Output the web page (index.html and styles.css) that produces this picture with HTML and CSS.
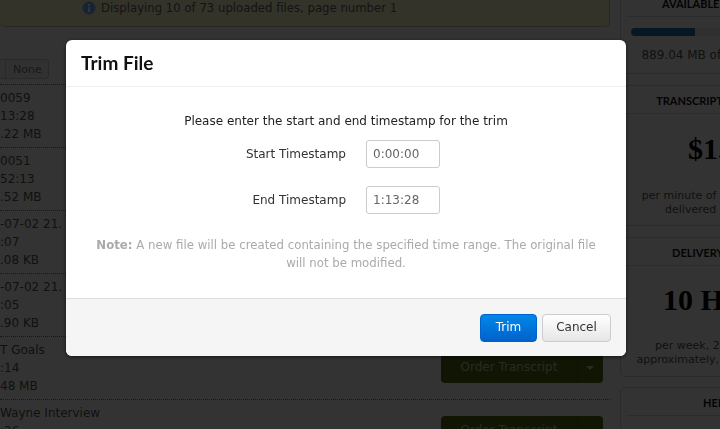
FILE: index.html
```html
<!DOCTYPE html>
<html lang="en">
<head>
    <meta charset="UTF-8">
    <meta name="viewport" content="width=device-width, initial-scale=1.0">
    <title>Trim File</title>
    <link rel="stylesheet" href="styles.css">
</head>
<body>
    <div class="page">
        <div class="main">
            <div class="notice">
                <svg class="notice-icon" width="14" height="14" viewBox="0 0 14 14">
                    <circle cx="7" cy="7" r="6.5" fill="#6eb4ff"/>
                    <rect x="6" y="6" width="2" height="5" fill="#fff"/>
                    <rect x="6" y="3" width="2" height="2" fill="#fff"/>
                </svg>
                <span>Displaying 10 of 73 uploaded files, page number 1</span>
            </div>

            <div class="select-bar">
                <div class="select-group">
                    <span class="select-all"></span>
                    <span class="select-none">None</span>
                </div>
            </div>

            <div class="file-row">
                <div class="file-info"><div>0059</div><div>13:28</div><div>.22 MB</div></div>
            </div>
            <div class="file-row">
                <div class="file-info"><div>0051</div><div>52:13</div><div>.52 MB</div></div>
            </div>
            <div class="file-row">
                <div class="file-info"><div>-07-02 21.</div><div>:07</div><div>.08 KB</div></div>
            </div>
            <div class="file-row">
                <div class="file-info"><div>-07-02 21.</div><div>:05</div><div>.90 KB</div></div>
            </div>
            <div class="file-row">
                <div class="file-info"><div>T Goals</div><div>:14</div><div>48 MB</div></div>
                <div class="order-button"><span class="order-label">Order Transcript</span><span class="order-caret"></span></div>
            </div>
            <div class="file-row">
                <div class="file-info"><div>Wayne Interview</div><div>:26</div></div>
                <div class="order-button"><span class="order-label">Order Transcript</span><span class="order-caret"></span></div>
            </div>
        </div>

        <div class="sidebar">
            <div class="box box-storage">
                <h3 class="box-title">AVAILABLE STORAGE SPACE</h3>
                <div class="progress"><div class="progress-fill"></div></div>
                <p class="storage-text">889.04 MB of 5.00 GB used up.</p>
            </div>
            <div class="box box-price">
                <h3 class="box-title">TRANSCRIPTION PRICE GUIDE</h3>
                <div class="big-value value-price">$1.00</div>
                <p class="box-text">per minute of audio or video files,<br>delivered within 10 hours</p>
            </div>
            <div class="box box-delivery">
                <h3 class="box-title">DELIVERY GUARANTEES</h3>
                <div class="big-value value-delivery">10 Hours</div>
                <p class="box-text">per week, 2 hours or less too<br>approximately, for all files you send</p>
            </div>
            <div class="box box-help">
                <h3 class="box-title">HELP GUIDE</h3>
            </div>
        </div>
    </div>

    <div class="overlay"></div>

    <div class="modal">
        <div class="modal-header">Trim File</div>
        <div class="modal-body">
            <p class="intro">Please enter the start and end timestamp for the trim</p>
            <div class="field">
                <label class="field-label">Start Timestamp</label>
                <input class="field-input" type="text" value="0:00:00">
            </div>
            <div class="field">
                <label class="field-label">End Timestamp</label>
                <input class="field-input" type="text" value="1:13:28">
            </div>
            <p class="note"><b>Note:</b> A new file will be created containing the specified time range. The original file will not be modified.</p>
        </div>
        <div class="modal-footer">
            <button class="btn btn-primary">Trim</button>
            <button class="btn btn-cancel">Cancel</button>
        </div>
    </div>
</body>
</html>
```

FILE: styles.css
```css
* {
    margin: 0;
    padding: 0;
    box-sizing: border-box;
}

html, body {
    height: 100%;
    overflow: hidden;
}

body {
    font-family: 'DejaVu Sans', sans-serif;
    font-size: 12px;
    line-height: 18px;
    color: #555;
    background-color: #fff;
}

.page {
    display: flex;
    width: 960px;
}

.main {
    width: 610px;
    flex-shrink: 0;
}

.notice {
    display: flex;
    align-items: center;
    gap: 5px;
    height: 28px;
    margin-top: -1px;
    padding: 0 0 10px 82px;
    font-size: 11.7px;
    background-color: #fffccf;
    border: 1px solid #c9c98a;
    border-top: none;
    border-left: none;
    border-radius: 0 0 5px 5px;
    color: #666;
}

.select-bar {
    height: 57px;
    padding-top: 32px;
}

.select-group {
    display: flex;
    width: 49px;
    height: 20px;
    background-color: #f5f5f5;
    border: 1px solid #ccc;
    border-left: none;
    border-radius: 0 4px 4px 0;
    font-size: 11px;
    line-height: 20px;
    color: #777;
}

.select-all {
    width: 6px;
    border-right: 1px solid #ccc;
}

.select-none {
    padding-left: 7px;
}

.file-row {
    display: flex;
    justify-content: space-between;
    height: 63px;
    padding: 4px 7px 0 0;
    border-top: 1px dotted #887f22;
}

.order-button {
    display: flex;
    width: 162px;
    height: 30px;
    margin-top: 12px;
    background-color: #4f7010;
    border-radius: 4px;
    color: #c8d0b0;
    font-size: 12px;
    line-height: 28px;
}

.order-label {
    flex: 1;
    text-align: center;
    border-right: 1px solid #405c0c;
}

.order-caret {
    position: relative;
    width: 25px;
}

.order-caret::after {
    content: "";
    position: absolute;
    left: 8px;
    top: 13px;
    border-left: 4px solid transparent;
    border-right: 4px solid transparent;
    border-top: 4px solid #c8d0b0;
}

.sidebar {
    width: 230px;
    margin-left: 10px;
    flex-shrink: 0;
}

.box {
    padding: 0 5px;
    background-color: #fff;
    border: 1px solid #d5d5d5;
    border-radius: 5px;
    text-align: center;
    margin-bottom: 11px;
}

.box-title {
    height: 28px;
    font-family: 'Lato', sans-serif;
    font-size: 11px;
    line-height: 30px;
    color: #111;
    border-bottom: 1px solid #ddd;
}

.box-storage {
    margin-top: -12px;
    height: 86px;
}

.progress {
    width: 200px;
    height: 8px;
    margin: 11px 0 0 5px;
    background-color: #eee;
    border-radius: 4px;
    overflow: hidden;
}

.progress-fill {
    width: 64px;
    height: 100%;
    background: repeating-linear-gradient(-45deg, #1e6fa8 0 14px, #2478b4 14px 28px);
}

.storage-text {
    margin-top: 10px;
}

.box-price {
    height: 141px;
}

.box-delivery {
    height: 140px;
    margin-bottom: 10px;
}

.big-value {
    text-align: left;
    font-family: 'Liberation Serif', serif;
    font-size: 30px;
    font-weight: bold;
    line-height: 36px;
    color: #000;
}

.value-price {
    margin: 17px 0 0 62px;
}

.value-delivery {
    margin: 16px 0 0 37px;
}

.box-text {
    font-size: 11px;
    line-height: 14px;
}

.box-price .box-text {
    margin-top: 22px;
}

.box-delivery .box-text {
    margin-top: 21px;
}

.box-help {
    height: 60px;
}

.overlay {
    position: fixed;
    inset: 0;
    background-color: rgba(0, 0, 0, 0.8);
}

.modal {
    position: fixed;
    left: 66px;
    top: 40px;
    width: 560px;
    height: 316px;
    display: flex;
    flex-direction: column;
    background-color: #fff;
    border-radius: 6px;
    box-shadow: 0 1px 4px rgba(0, 0, 0, 0.6);
    overflow: hidden;
}

.modal-header {
    flex-shrink: 0;
    height: 47px;
    padding-left: 15px;
    font-family: 'Lato', sans-serif;
    font-size: 19px;
    font-weight: 700;
    line-height: 46px;
    color: #111;
    border-bottom: 1px solid #eee;
}

.modal-body {
    flex: 1;
    padding-top: 25px;
    color: #333;
}

.intro {
    text-align: center;
    height: 21px;
    color: #222;
}

.field {
    display: flex;
    align-items: center;
    height: 28px;
    margin: 7px 0 18px;
}

.field-label {
    width: 280px;
    text-align: right;
    color: #333;
}

.field-input {
    width: 74px;
    height: 28px;
    margin-left: 20px;
    padding: 0 6px;
    font-family: 'DejaVu Sans', sans-serif;
    font-size: 12px;
    color: #666;
    background-color: #fff;
    border: 1px solid #ccc;
    border-radius: 3px;
}

.note {
    margin: 22px 30px 0;
    text-align: center;
    font-size: 11.75px;
    color: #aaa;
}

.modal-footer {
    flex-shrink: 0;
    display: flex;
    justify-content: flex-end;
    gap: 5px;
    height: 58px;
    padding: 15px 15px 0 0;
    background-color: #f5f5f5;
    border-top: 1px solid #ddd;
}

.btn {
    height: 28px;
    padding: 0 0 2px;
    font-family: 'DejaVu Sans', sans-serif;
    font-size: 12px;
    color: #333;
    background: linear-gradient(#fff, #e6e6e6);
    border: 1px solid #ccc;
    border-radius: 4px;
}

.btn-cancel {
    width: 69px;
}

.btn-primary {
    width: 57px;
    color: #fff;
    background: linear-gradient(#0088e8, #0062cc);
    border-color: #0062cc;
}
```
